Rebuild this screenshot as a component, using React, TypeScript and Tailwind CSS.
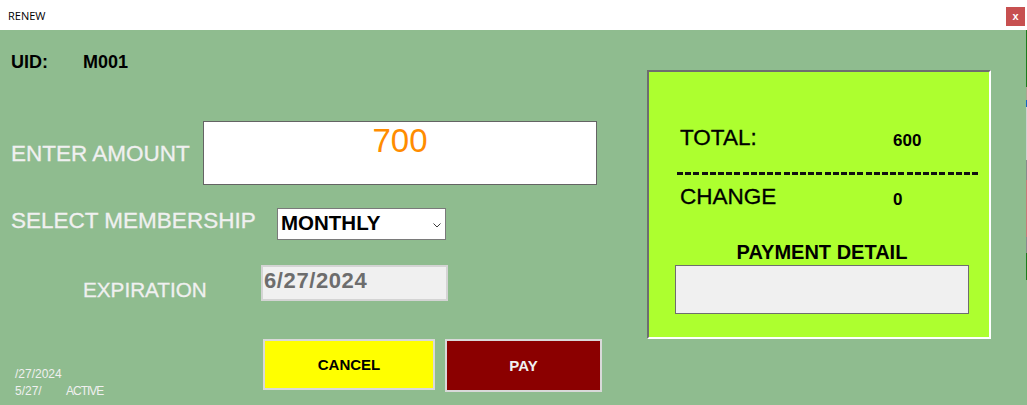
import React from "react";

export default function App() {
  return (
    <div className="flex h-[405px] w-[1027px] overflow-hidden font-['Liberation_Sans',Arial,sans-serif]">
      <div className="flex w-[1026px] flex-col">
        {/* Title bar */}
        <div className="flex h-[30px] items-center justify-between bg-white">
          <span className="pl-[8px] font-['Open_Sans',sans-serif] text-[11px] leading-none text-black">RENEW</span>
          <div className="mr-[1px] mt-[7px] flex h-[19px] w-[19px] items-center justify-center self-start bg-[#c75050] text-[11px] font-bold leading-none text-white">
            x
          </div>
        </div>

        {/* Body */}
        <div className="flex flex-1 bg-[#8fbc8f]">
          {/* Left column */}
          <div className="flex w-[647px] flex-col">
            <div className="ml-[11px] mt-[23px] flex text-[18px] font-bold leading-none text-black">
              <span className="w-[72px]">UID:</span>
              <span>M001</span>
            </div>

            <div className="mt-[50px] flex items-start">
              <span className="ml-[11px] mt-[22px] w-[192px] whitespace-nowrap text-[22.5px] leading-none text-[#f0f0f0] [-webkit-text-stroke:0.3px]">
                ENTER AMOUNT
              </span>
              <div className="h-[64px] w-[394px] border border-[#646464] bg-white text-center">
                <div className="pt-[2px] text-[33px] leading-none text-[#ff8c00]">700</div>
              </div>
            </div>

            <div className="mt-[23px] flex items-start">
              <span className="ml-[11px] mt-[2px] w-[266px] whitespace-nowrap text-[22.5px] leading-none text-[#f0f0f0] [-webkit-text-stroke:0.3px]">
                SELECT MEMBERSHIP
              </span>
              <div className="flex h-[32px] w-[169px] items-start justify-between border border-[#7a7a7a] bg-white pl-[3px] pr-[4px]">
                <span className="mt-[4px] text-[20.5px] font-bold leading-none text-black">MONTHLY</span>
                <svg className="mt-[14px]" width="8" height="5" viewBox="0 0 8 5" fill="none">
                  <path d="M0.5 0.5 L4 4 L7.5 0.5" stroke="#3c3c3c" strokeWidth="1" />
                </svg>
              </div>
            </div>

            <div className="mt-[25px] flex items-start">
              <span className="ml-[83px] mt-[15px] w-[178px] whitespace-nowrap text-[20.7px] leading-none text-[#f0f0f0] [-webkit-text-stroke:0.3px]">
                EXPIRATION
              </span>
              <div className="h-[36px] w-[187px] border-2 border-[#d4d4d4] bg-[#f0f0f0] pl-[1px] pt-[3px]">
                <span className="text-[22px] font-bold leading-none tracking-[0.6px] text-[#6d6d6d]">6/27/2024</span>
              </div>
            </div>

            <div className="mt-[38px] flex items-start">
              <div className="ml-[15px] mt-[27px] w-[248px] text-[12px] leading-[16.5px] text-[#f0f0f0]">
                <div>/27/2024</div>
                <div className="flex">
                  <span className="w-[51px]">5/27/</span>
                  <span className="tracking-[-1px]">ACTIVE</span>
                </div>
              </div>
              <button className="flex h-[51px] w-[172px] items-center justify-center border-2 border-[#d9d9d9] bg-[#ffff00] text-[15px] font-bold leading-none text-black">
                CANCEL
              </button>
              <button className="ml-[10px] flex h-[53px] w-[157px] items-center justify-center border-2 border-[#d9d9d9] bg-[#8b0000] text-[15px] font-bold leading-none text-[#f0f0f0]">
                PAY
              </button>
            </div>
          </div>

          {/* Right panel */}
          <div className="mt-[40px] flex h-[269px] w-[344px] flex-col border-2 border-b-white border-l-[#6e6e6e] border-r-white border-t-[#6e6e6e] bg-[#adff2f]">
            <div className="ml-[31px] mt-[55px] flex items-start leading-none text-black">
              <span className="w-[213px] text-[22.5px] [-webkit-text-stroke:0.3px]">TOTAL:</span>
              <span className="mt-[5px] text-[17px] font-bold">600</span>
            </div>
            <div className="ml-[28px] mt-[22px] h-[3px] w-[302px] bg-[repeating-linear-gradient(90deg,#111_0px,#111_6px,transparent_6px,transparent_8.2px)]" />
            <div className="ml-[31px] mt-[11px] flex items-start leading-none text-black">
              <span className="w-[213px] text-[22.5px] [-webkit-text-stroke:0.3px]">CHANGE</span>
              <span className="mt-[5px] text-[17px] font-bold">0</span>
            </div>
            <div className="ml-[26px] mt-[34px] w-[294px] text-center text-[20px] font-bold leading-none text-black">
              PAYMENT DETAIL
            </div>
            <div className="ml-[26px] mt-[3px] h-[49px] w-[294px] border border-[#6e6e6e] bg-[#f0f0f0]" />
          </div>
          <div className="flex-1" />
        </div>
      </div>

      {/* Edge of window behind */}
      <div className="flex w-[1px] flex-col">
        <div className="h-[30px] bg-white" />
        <div className="h-[57px] bg-[#1e7b1e]" />
        <div className="h-[13px] bg-[#a8a890]" />
        <div className="h-[7px] bg-[#1565c0]" />
        <div className="h-[53px] bg-[#d0d0d0]" />
        <div className="h-[20px] bg-[#8a8a8a]" />
        <div className="h-[57px] bg-[#c87878]" />
        <div className="h-[16px] bg-[#8a8a8a]" />
        <div className="h-[27px] bg-[#1e7b1e]" />
        <div className="flex-1 bg-[#8fbc8f]" />
      </div>
    </div>
  );
}
